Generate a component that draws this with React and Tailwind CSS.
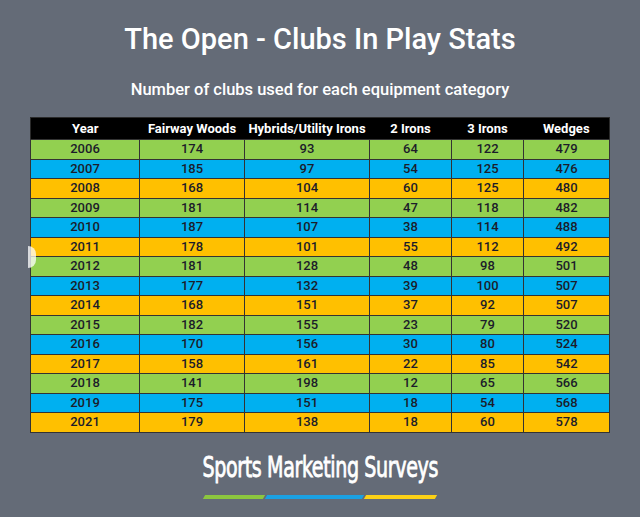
import React from "react";

const rows = [
  ["2006", 174, 93, 64, 122, 479],
  ["2007", 185, 97, 54, 125, 476],
  ["2008", 168, 104, 60, 125, 480],
  ["2009", 181, 114, 47, 118, 482],
  ["2010", 187, 107, 38, 114, 488],
  ["2011", 178, 101, 55, 112, 492],
  ["2012", 181, 128, 48, 98, 501],
  ["2013", 177, 132, 39, 100, 507],
  ["2014", 168, 151, 37, 92, 507],
  ["2015", 182, 155, 23, 79, 520],
  ["2016", 170, 156, 30, 80, 524],
  ["2017", 158, 161, 22, 85, 542],
  ["2018", 141, 198, 12, 65, 566],
  ["2019", 175, 151, 18, 54, 568],
  ["2021", 179, 138, 18, 60, 578],
];

const headers = ["Year", "Fairway Woods", "Hybrids/Utility Irons", "2 Irons", "3 Irons", "Wedges"];
const rowColors = ["bg-[#92d050]", "bg-[#00b0f0]", "bg-[#ffc000]"];

const App = () => {
  return (
    <div className="relative w-[640px] h-[517px] overflow-hidden bg-[#646b77] font-['Roboto',sans-serif] flex flex-col items-center">
      {/* Title */}
      <h1 className="mt-[22px] text-white text-[29px] font-medium tracking-[0px] leading-[34px]">
        The Open - Clubs In Play Stats
      </h1>
      <p className="mt-[24px] text-white text-[16.5px] font-medium leading-[20px]">
        Number of clubs used for each equipment category
      </p>

      {/* Table */}
      <table className="mt-[17px] w-[579px] table-fixed border-collapse border border-[#2a2a2a] text-[13px] text-center">
        <colgroup>
          <col className="w-[109px]" />
          <col className="w-[105px]" />
          <col className="w-[125px]" />
          <col className="w-[82px]" />
          <col className="w-[72px]" />
          <col className="w-[86px]" />
        </colgroup>
        <thead>
          <tr className="bg-black text-white h-[21px]">
            {headers.map((h) => (
              <th key={h} className="font-bold p-0 leading-[21px]">{h}</th>
            ))}
          </tr>
        </thead>
        <tbody>
          {rows.map((r, i) => (
            <tr key={r[0]} className={`${rowColors[i % 3]} h-[19.5px] text-[#1c1c2a]`}>
              {r.map((v, j) => (
                <td key={j} className="p-0 font-medium leading-[18px] border border-[#333]">{v}</td>
              ))}
            </tr>
          ))}
        </tbody>
      </table>

      {/* Logo */}
      <div className="mt-[18px] flex flex-col items-center">
        <div className="text-white text-[29px] leading-[32px] font-['DejaVu_Sans_Condensed','Roboto',sans-serif] tracking-[-0.5px] scale-x-[0.73] [-webkit-text-stroke:0.8px_white]">
          Sports Marketing Surveys
        </div>
        <div className="mt-[12px] flex gap-[2px]">
          <div className="w-[60px] h-[4px] bg-[#8cc63f] -skew-x-[30deg]" />
          <div className="w-[97px] h-[4px] bg-[#1ba1e2] -skew-x-[30deg]" />
          <div className="w-[71px] h-[4px] bg-[#fcd116] -skew-x-[30deg]" />
        </div>
      </div>

      {/* slider handle peeking from under the left edge */}
      <div className="absolute left-[28px] top-[246px] w-[8px] h-[22px] rounded-r-full bg-white/75" />
    </div>
  );
};

export default App;
